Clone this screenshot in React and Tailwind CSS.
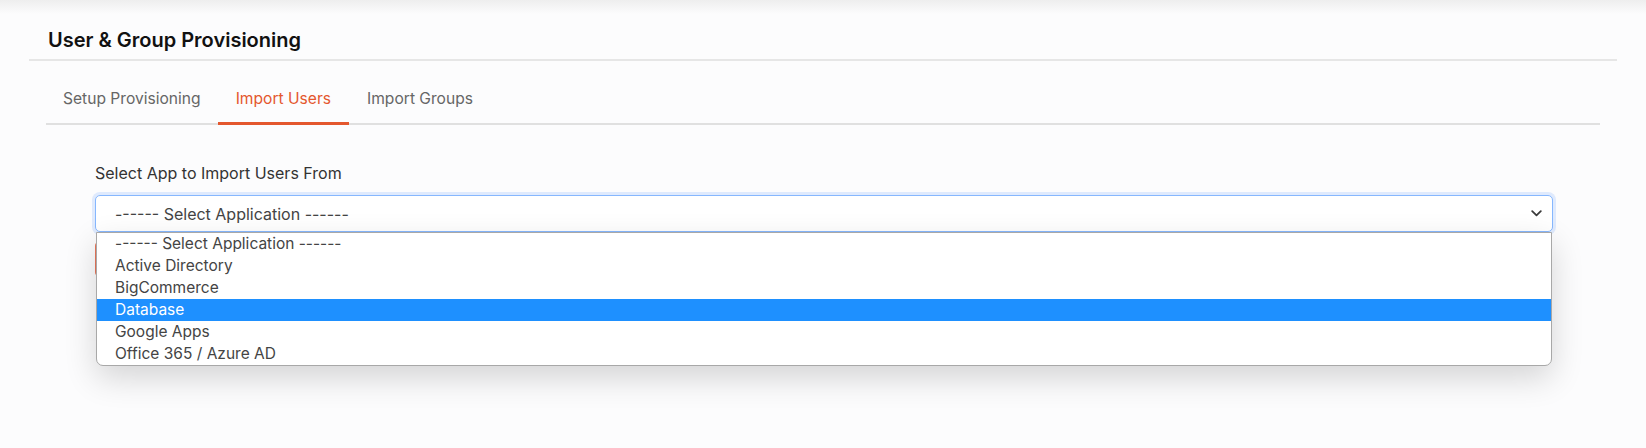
import React from "react";

const options = [
  "------ Select Application ------",
  "Active Directory",
  "BigCommerce",
  "Database",
  "Google Apps",
  "Office 365 / Azure AD",
];

function Chevron() {
  return (
    <svg width="11" height="7" viewBox="0 0 11 7" fill="none">
      <path d="M1.2 1.2 L5.5 5.3 L9.8 1.2" stroke="#3a3a3a" strokeWidth="1.8" strokeLinecap="round" strokeLinejoin="round" />
    </svg>
  );
}

export default function App() {
  return (
    <div
      className="relative w-[1646px] h-[448px] overflow-hidden bg-[#fcfcfd] text-[#333]"
      style={{ fontFamily: "Inter, Lato, sans-serif" }}
    >
      <div className="absolute left-0 top-0 w-full h-[14px] bg-gradient-to-b from-[#eeeeee] to-[#fcfcfd]" />
      <div className="relative ml-[29px] w-[1588px] pt-[27px]">
        <h1 className="pl-[19px] text-[20px] leading-[26px] font-semibold text-[#111]">
          User &amp; Group Provisioning
        </h1>
        <div className="mt-[6px] h-[2px] bg-[#e6e6e6]" />
        <div className="ml-[17px] mr-[17px] mt-[27px] flex border-b-2 border-[#e0e0e0]">
          <div className="px-[17px] pb-[13px] text-[15.6px] leading-[22px] text-[#666]">Setup Provisioning</div>
          <div className="relative px-[18px] pb-[13px] text-[15.6px] leading-[22px] text-[#e4572e]">
            Import Users
            <div className="absolute left-0 right-0 -bottom-[2px] h-[3px] bg-[#e4572e]" />
          </div>
          <div className="px-[18px] pb-[13px] text-[15.6px] leading-[22px] text-[#666]">Import Groups</div>
        </div>
        <div className="ml-[66px] w-[1458px] mt-[38px]">
          <div className="text-[16px] leading-[20px] text-[#333]">Select App to Import Users From</div>
          <div className="relative mt-[12px]">
            <div className="flex h-[37px] items-center justify-between rounded-[5px] border border-[#86b7fe] bg-white pl-[19px] pr-[10px] text-[16px] text-[#444] shadow-[0_0_0_3px_rgba(13,110,253,0.12)]">
              <span>------ Select Application ------</span>
              <Chevron />
            </div>
            <div className="mt-[10px] h-[34px] w-[120px] rounded-[4px] bg-[#e8765a]" />
            <div className="absolute left-[1px] top-[37px] w-[1456px] rounded-b-[7px] border border-[#a8a8a8] bg-white shadow-[0_12px_32px_rgba(0,0,0,0.16)] overflow-hidden">
              {options.map((o, i) => (
                <div
                  key={o}
                  className={
                    i === 3
                      ? "h-[22px] pl-[18px] text-[15.5px] leading-[22px] bg-[#1e90ff] text-white"
                      : "h-[22px] pl-[18px] text-[15.5px] leading-[22px] text-[#444]"
                  }
                >
                  {o}
                </div>
              ))}
            </div>
          </div>
        </div>
      </div>
    </div>
  );
}
